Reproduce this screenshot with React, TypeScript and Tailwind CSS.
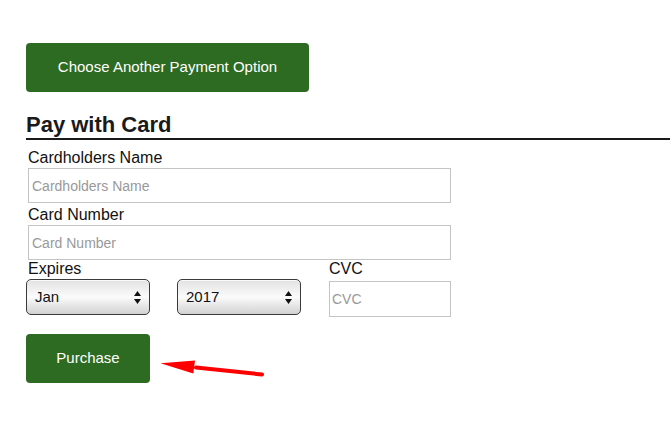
const font = { fontFamily: '"Liberation Sans", Arial, sans-serif' }

function SelectBox({ value }: { value: string }) {
  return (
    <div className="relative w-[124px] h-[36px] rounded-[5px] border border-[#3a3a3a] bg-linear-to-b from-[#e2e2e2] via-[#fbfbfb] to-[#d2d2d2] shadow-[inset_0_1px_0_rgba(255,255,255,0.8)] flex items-center pl-[8px] text-[15px] text-[#111]">
      {value}
      <svg className="absolute right-[8px] top-[11px]" width="7" height="13" viewBox="0 0 7 13">
        <path d="M3.5 0 L7 5 L0 5 Z" fill="#111" />
        <path d="M3.5 13 L7 8 L0 8 Z" fill="#111" />
      </svg>
    </div>
  )
}

export default function App() {
  return (
    <div className="w-[670px] h-[424px] bg-white relative overflow-hidden" style={font}>
      <div className="pt-[43px] pl-[26px]">
        <button className="w-[283px] h-[49px] rounded-[4px] bg-[#2e6b22] text-white text-[15px]">
          Choose Another Payment Option
        </button>

        <h2 className="mt-[20px] text-[22px] font-bold text-[#1a1a1a] leading-[26px] border-b-2 border-[#1a1a1a]">
          Pay with Card
        </h2>

        <div className="pl-[2px]">
          <label className="block mt-[9px] text-[16px] leading-[18px] text-[#111]">Cardholders Name</label>
          <input
            className="block mt-[1px] w-[423px] h-[35px] border border-[#c4c4c4] px-[3px] text-[14px] placeholder:text-[#999] outline-none"
            placeholder="Cardholders Name"
          />
          <label className="block mt-[3px] text-[16px] leading-[18px] text-[#111]">Card Number</label>
          <input
            className="block mt-[1px] w-[423px] h-[35px] border border-[#c4c4c4] px-[3px] text-[14px] placeholder:text-[#999] outline-none"
            placeholder="Card Number"
          />
        </div>

        <div className="flex">
          <div className="flex flex-col">
            <label className="pl-[2px] text-[16px] leading-[18px] text-[#111]">Expires</label>
            <div className="flex gap-[27px] mt-[1px]">
              <SelectBox value="Jan" />
              <SelectBox value="2017" />
            </div>
          </div>
          <div className="flex flex-col ml-[28px]">
            <label className="text-[16px] leading-[18px] text-[#111]">CVC</label>
            <input
              className="mt-[3px] w-[122px] h-[36px] border border-[#c4c4c4] px-[2px] text-[14px] placeholder:text-[#999] outline-none"
              placeholder="CVC"
            />
          </div>
        </div>

        <button className="mt-[17px] w-[124px] h-[49px] rounded-[4px] bg-[#2e6b22] text-white text-[15px]">
          Purchase
        </button>
      </div>

      <svg className="absolute left-0 top-0 pointer-events-none" width="670" height="424">
        <line x1="196" y1="367.5" x2="262" y2="374.5" stroke="#f00" strokeWidth="4" strokeLinecap="round" />
        <path d="M160.5 363.3 L195 360.5 L193.3 373.5 Z" fill="#f00" />
      </svg>
    </div>
  )
}
